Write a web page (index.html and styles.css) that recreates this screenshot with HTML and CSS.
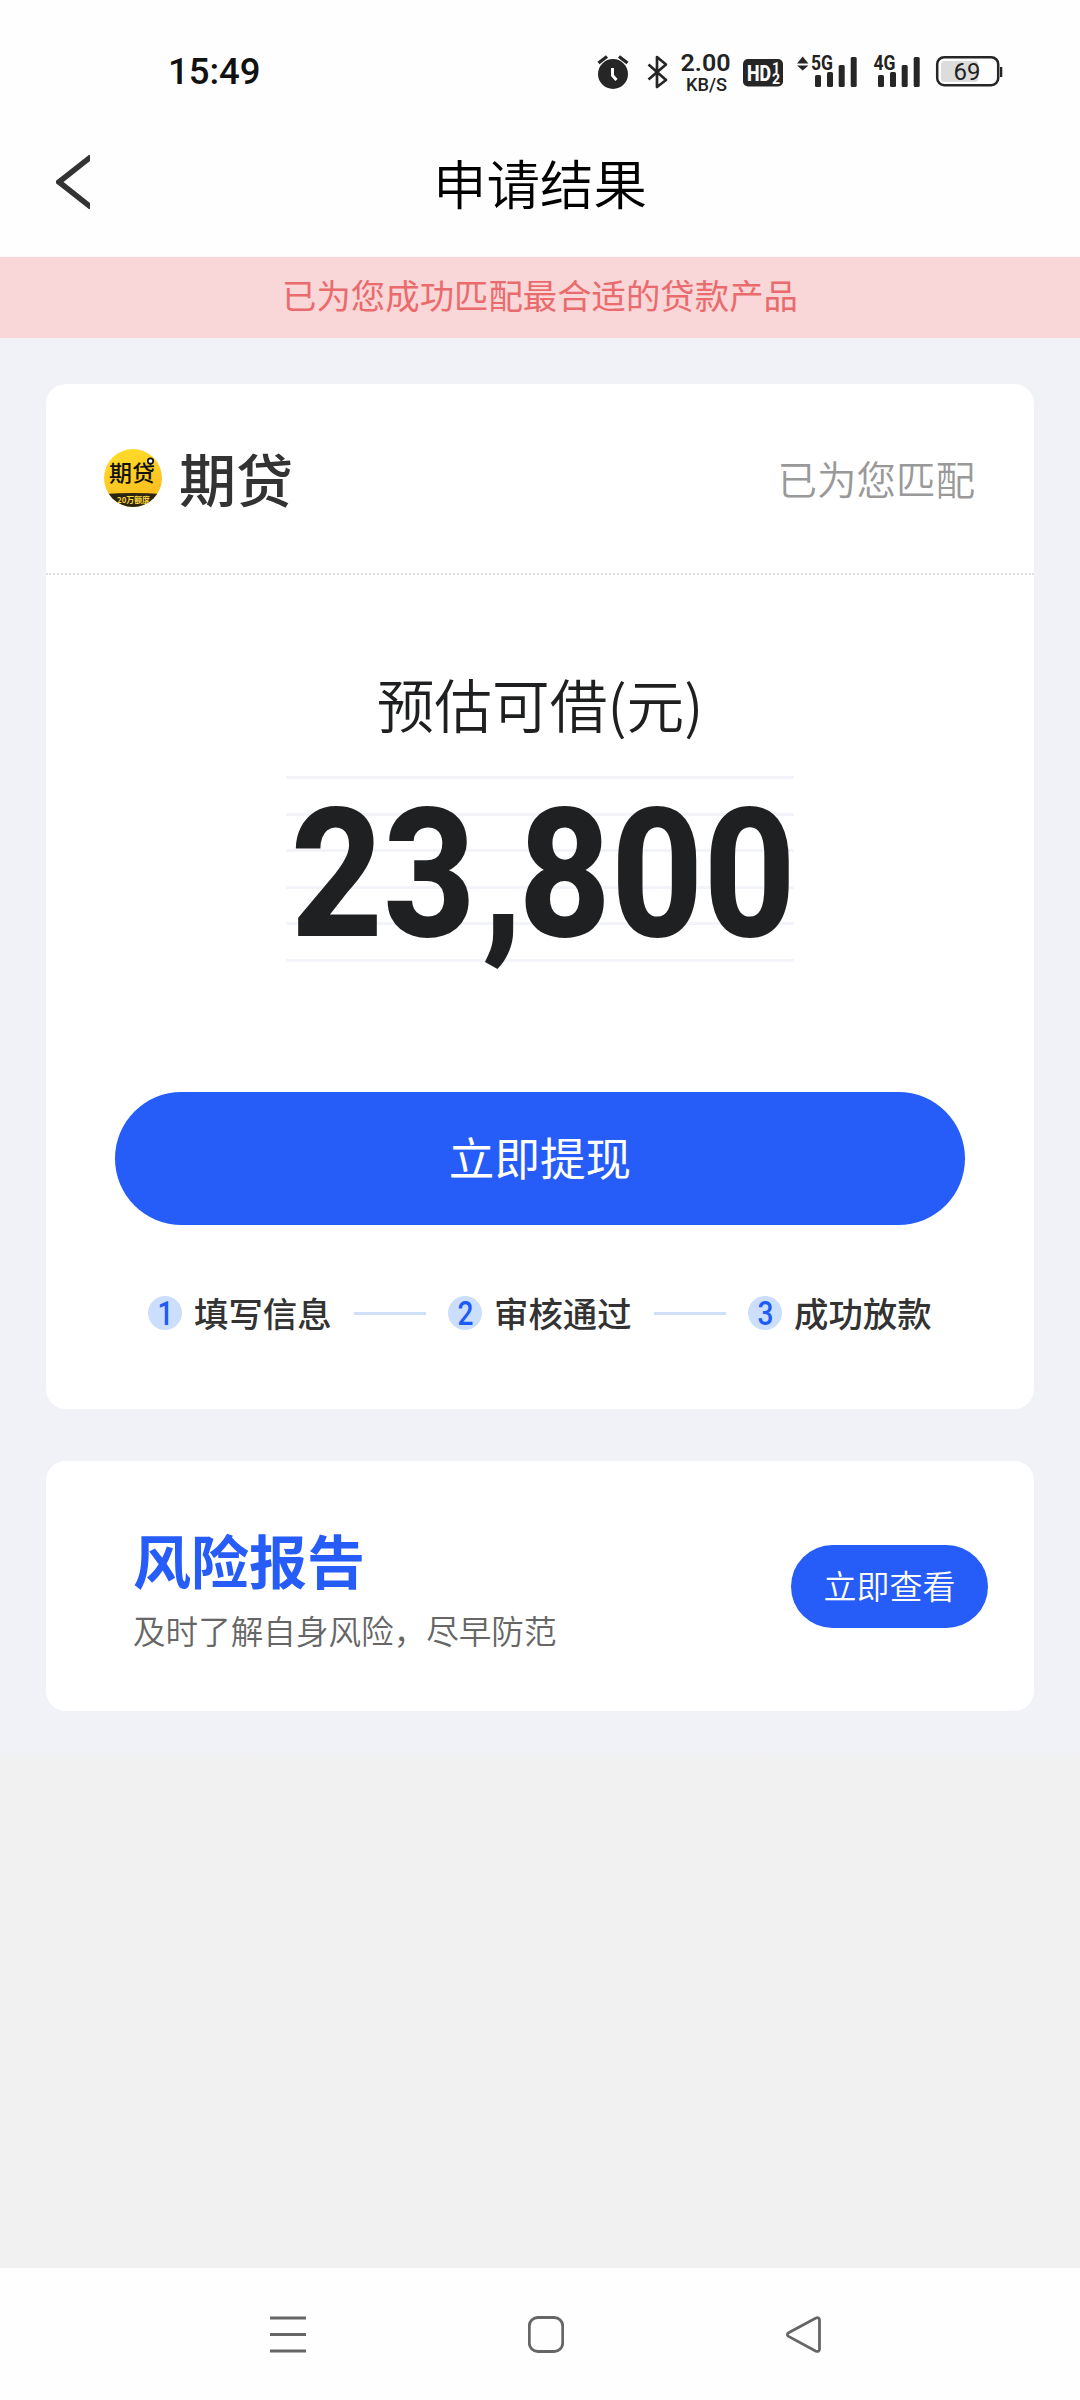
FILE: index.html
```html
<!DOCTYPE html>
<html lang="zh-CN">
<head>
<meta charset="utf-8">
<title>申请结果</title>
<link rel="stylesheet" href="styles.css">
</head>
<body>
<div class="screen">
  <header class="top">
    <div class="status">
      <span class="clock">15:49</span>
      <svg class="status-icons" width="408" height="44" viewBox="596 50 408 44">
        <g class="ink">
          <circle cx="613" cy="74" r="15"/>
          <path class="line w3" d="M598.500 63l8.500-6.500M627.500 63l-8.500-6.500"/>
          <path class="cut" d="M612.500 68v7.500l4 4.500"/>
          <path class="line w27" d="M648.500 64.500L666 80 657 87V57l9 7.500L648.500 79.500"/>
          <rect x="743" y="59" width="40" height="27.500" rx="5"/>
          <path d="M797 63.500l5.700-7 5.700 7zM797 65.500h11.400l-5.700 5z"/>
          <rect x="815" y="75" width="6" height="12" rx="1.500"/><rect x="827" y="72" width="6" height="15" rx="1.500"/><rect x="838.700" y="65" width="6" height="22" rx="1.500"/><rect x="850.700" y="57" width="6" height="30" rx="1.500"/>
          <rect x="878" y="75" width="6" height="12" rx="1.500"/><rect x="890" y="72" width="6" height="15" rx="1.500"/><rect x="901.700" y="65" width="6" height="22" rx="1.500"/><rect x="913.700" y="57" width="6" height="30" rx="1.500"/>
          <rect x="1000" y="67" width="2.300" height="10"/>
        </g>
        <rect x="941" y="61" width="37" height="21" rx="3" fill="#dcdcdc"/>
        <rect class="line w25" x="937.200" y="57.200" width="61" height="28" rx="7"/>
        <g class="st">
          <text x="680.500" y="71" font-size="24" font-weight="600" textLength="50" lengthAdjust="spacingAndGlyphs">2.00</text>
          <text x="686" y="90.500" font-size="19" font-weight="500" textLength="41" lengthAdjust="spacingAndGlyphs">KB/S</text>
          <text class="white" x="747" y="81" font-size="22" font-weight="800" textLength="24" lengthAdjust="spacingAndGlyphs">HD</text>
          <text class="white" x="772" y="72.500" font-size="14" font-weight="700">1</text>
          <text class="white" x="772" y="83.500" font-size="14" font-weight="700">2</text>
          <text class="halo" x="811" y="70" font-size="20" font-weight="700" textLength="22" lengthAdjust="spacingAndGlyphs">5G</text>
          <text class="halo" x="873.500" y="70" font-size="20" font-weight="700" textLength="22" lengthAdjust="spacingAndGlyphs">4G</text>
          <text x="953.500" y="80" font-size="24" textLength="27" font-weight="400">69</text>
        </g>
      </svg>
    </div>
    <div class="titlebar">
      <svg class="back" width="34" height="54" viewBox="0 0 34 54"><path d="M36 1L3 27l33 26"/></svg>
      <h1>申请结果</h1>
    </div>
  </header>
  <div class="notice">已为您成功匹配最合适的贷款产品</div>
  <main>
    <section class="card offer">
      <div class="offer-head">
        <svg class="logo" width="58" height="58" viewBox="0 0 58 58">
          <defs>
            <clipPath id="disc"><circle cx="29" cy="29" r="29"/></clipPath>
            <linearGradient id="gold" x2=".3" y2="1"><stop offset="0" stop-color="#ffdf2b"/><stop offset="1" stop-color="#fdbd1e"/></linearGradient>
          </defs>
          <g clip-path="url(#disc)">
            <rect width="58" height="58" fill="url(#gold)"/>
            <path d="M0 45Q29 43 58 45V58H0z" fill="#2c2511"/>
            <text x="5" y="32" class="logo-name" textLength="46" lengthAdjust="spacingAndGlyphs">期贷</text>
            <circle cx="46.500" cy="12" r="2.700" fill="#fff" stroke="#111" stroke-width="1.700"/>
            <text x="13" y="54" class="logo-tag" textLength="33" lengthAdjust="spacingAndGlyphs">20万额度</text>
          </g>
        </svg>
        <span class="brand">期贷</span>
        <span class="matched">已为您匹配</span>
      </div>
      <div class="offer-label">预估可借(元)</div>
      <div class="amount"><span class="digits">23<span class="comma">,</span>800</span></div>
      <button class="cta">立即提现</button>
      <div class="steps">
        <span class="num"><b>1</b></span><span class="step">填写信息</span><i class="rule"></i>
        <span class="num"><b>2</b></span><span class="step">审核通过</span><i class="rule"></i>
        <span class="num"><b>3</b></span><span class="step">成功放款</span>
      </div>
    </section>
    <section class="card report">
      <div>
        <h2>风险报告</h2>
        <p>及时了解自身风险，尽早防范</p>
      </div>
      <button class="view">立即查看</button>
    </section>
  </main>
  <nav>
    <svg width="36" height="37" viewBox="0 0 36 37"><path d="M0 2h36M0 18.500h36M0 35h36"/></svg>
    <svg width="36" height="37" viewBox="0 0 36 37"><rect x="1.300" y="1.500" width="33.400" height="34" rx="8.500"/></svg>
    <svg width="36" height="37" viewBox="0 0 36 37"><path d="M2.600 16.800Q0 18.500 2.600 20.400L29.500 35Q33.500 36.500 33.500 33V4.200Q33.500 .600 29.500 2.200Z"/></svg>
  </nav>
</div>
</body>
</html>
```
FILE: styles.css
```css
* { box-sizing: border-box; margin: 0; padding: 0; }
body { width: 1080px; font-family: "Noto Sans CJK SC", sans-serif; background: #f1f1f1; }
.screen { height: 2400px; display: flex; flex-direction: column; }
button { border: 0; font-family: inherit; color: #fff; background: #265cf8; }

.top { height: 257px; background: #fefefe; padding-top: 50px; }
.status { height: 44px; display: flex; justify-content: space-between; align-items: center; padding: 0 76px 0 168px; }
.clock { font: 500 36.5px/44px Roboto, sans-serif; color: #111; }
.status-icons { display: block; }
.ink { fill: #262626; }
.line { fill: none; stroke: #262626; stroke-linejoin: round; }
.w3 { stroke-width: 3.4; }
.w27 { stroke-width: 2.7; }
.w25 { stroke-width: 2.5; }
.cut { fill: none; stroke: #fff; stroke-width: 3; }
.st { font-family: Roboto, sans-serif; fill: #222; }
.white { fill: #fff; }
.halo { paint-order: stroke; stroke: #fefefe; stroke-width: 3px; }
.titlebar { height: 163px; display: grid; grid-template-columns: 1fr auto 1fr; align-items: center; padding: 13px 56px 0; }
.back { fill: none; stroke: #333; stroke-width: 5.5; }
.titlebar h1 { grid-column: 2; font-size: 53.5px; line-height: 70px; font-weight: 350; color: #000; }

.notice { height: 81px; background: #f9d6d7; color: #ea6b6d; font-size: 34.4px; line-height: 75px; text-align: center; }

main { height: 1425px; padding: 46px; background: linear-gradient(#f1f2f8 1408px, #f1f1f1); display: flex; flex-direction: column; gap: 52px; }
.card { background: #fff; border-radius: 20px; }
.offer { height: 1025px; display: flex; flex-direction: column; align-items: center; }
.offer-head { width: 100%; height: 191px; border-bottom: 2px dotted #ddd; display: flex; align-items: center; padding: 0 58px; }
.logo { margin-bottom: 1px; }
.logo-name { font-size: 22px; font-weight: 500; fill: #111; }
.logo-tag { font-size: 8px; font-weight: 700; fill: #ffd83b; }
.brand { margin: 0 0 4px 17px; font-size: 57px; line-height: 70px; font-weight: 500; color: #333; }
.matched { margin: 0 1px 2px auto; font-size: 39.5px; line-height: 60px; color: #999; font-weight: 350; }
.offer-label { margin-top: 88px; font-size: 57.7px; line-height: 80px; color: #1e1f20; font-weight: 350; }
.amount { margin-top: 33px; width: 508px; height: 186px; display: flex; justify-content: center; background: repeating-linear-gradient(#f3f3fa 0 3px, transparent 3px 36.6px); }
.digits { font: 800 180px/186px Roboto, sans-serif; color: #1f2021; transform: scaleX(.89); padding: 6px 0 0 8px; }
.comma { margin: 0 -5px 0 7px; }
.cta { margin-top: 130px; width: 850px; height: 133px; border-radius: 67px; font-size: 45.6px; line-height: 124px; padding-bottom: 6px; }
.steps { margin-top: 63px; width: 784px; height: 50px; display: flex; align-items: center; }
.num { width: 34px; height: 34px; border-radius: 50%; background: #cbdefc; color: #1c5bf5; font: 500 33px/35px Roboto, sans-serif; display: flex; justify-content: center; }
.num b { font-weight: 500; transform: scaleX(.85); }
.step { width: 137px; margin: 0 0 3px 12px; font-size: 34.4px; line-height: 50px; font-weight: 500; color: #333; white-space: nowrap; }
.rule { width: 72px; height: 3px; margin: 0 22px 0 23px; background: #d0e0f9; }

.report { height: 250px; display: flex; justify-content: space-between; align-items: center; padding: 0 46px 0 87px; }
.report h2 { font-size: 58px; line-height: 80px; margin-top: 2px; font-weight: 600; color: #265cf8; }
.report p { font-size: 32.6px; line-height: 50px; margin-top: 6px; color: #666; font-weight: 350; }
.view { width: 197px; height: 83px; border-radius: 42px; font-size: 33px; line-height: 79px; padding-bottom: 2px; font-weight: 350; }

nav { margin-top: auto; height: 132px; background: #fefefe; display: flex; justify-content: space-between; align-items: center; padding: 0 258px 0 270px; }
nav svg { fill: none; stroke: #666; stroke-width: 2.8; }
```
